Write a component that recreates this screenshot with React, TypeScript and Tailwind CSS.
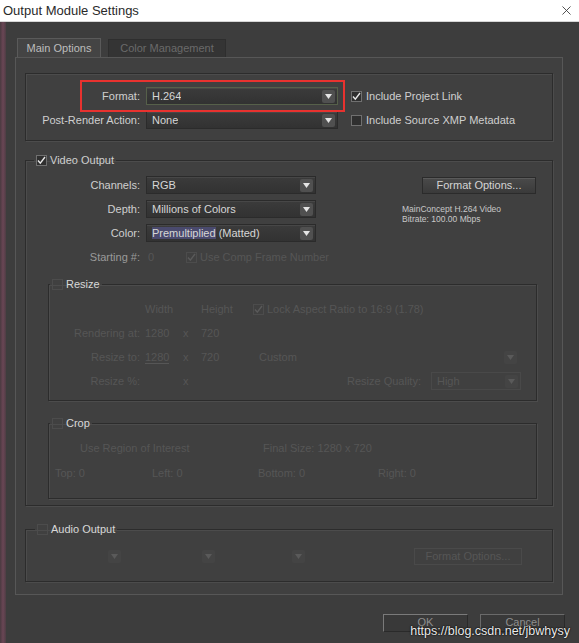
import { X } from "lucide-react";

function Arrow({ dim }: { dim?: boolean }) {
  return (
    <span className={`flex h-[13px] w-[13px] items-center justify-center rounded-[2px] ${dim ? "bg-[#444444]" : "bg-[#505050]"}`}>
      <svg width="7" height="5" viewBox="0 0 7 5">
        <path d="M0 0h7L3.5 5z" fill={dim ? "#5a5a5a" : "#e4e4e4"} />
      </svg>
    </span>
  );
}

function Select({ value, className = "", dim, children }: { value?: string; className?: string; dim?: boolean; children?: React.ReactNode }) {
  return (
    <div
      className={`flex h-[18px] shrink-0 items-center justify-between border pl-[5px] pr-[2px] ${
        dim
          ? "border-[#494949] text-[#565656]"
          : "border-[#2b2b2b] bg-[linear-gradient(#3b3b3b,#323232)] text-[#d6d6d6] shadow-[inset_0_1px_0_#474747]"
      } ${className}`}
    >
      <span className="truncate">{children ?? value}</span>
      <Arrow dim={dim} />
    </div>
  );
}

function Check({ checked, dim }: { checked?: boolean; dim?: boolean }) {
  return (
    <span
      className={`flex h-[11px] w-[11px] shrink-0 items-center justify-center border ${
        dim ? "border-[#4c4c4c]" : "border-[#707070] bg-[#2f2f2f]"
      }`}
    >
      {checked && (
        <svg width="9" height="9" viewBox="0 0 9 9">
          <path d="M1 4.5l2.3 2.6L8 1" fill="none" stroke={dim ? "#5a5a5a" : "#e8e8e8"} strokeWidth="1.4" />
        </svg>
      )}
    </span>
  );
}

const etched = "border border-[#2c2c2c] shadow-[inset_1px_1px_0_#4c4c4c,1px_1px_0_#4c4c4c]";

export default function App() {
  return (
    <div className="relative flex h-[643px] w-[579px] flex-col overflow-hidden bg-[#3d3d3d] font-['Liberation_Sans',Arial,sans-serif] text-[11px] text-[#cfcfcf]">
      {/* title bar */}
      <div className="flex h-[22px] shrink-0 items-center justify-between border-b border-[#d6d6d6] bg-white pl-[3px] pr-[5px]">
        <span className="text-[13px] text-[#2a2a2a]">Output Module Settings</span>
        <X className="h-[15px] w-[15px] text-[#3a3a3a]" strokeWidth={1.4} />
      </div>

      <div className="flex flex-1">
        <div className="w-[6px] bg-[linear-gradient(90deg,#4a3a40,#6a4655,#4e3d44)]" />

        <div className="flex flex-1 flex-col pl-[9px]">
          {/* tabs */}
          <div className="mt-[16px] ml-[2px] flex h-[19px] items-end gap-[7px]">
            <div className="flex h-[19px] w-[84px] items-center justify-center border border-b-0 border-[#5a5a5a] bg-[#444444] text-[#bdbdbd]">
              Main Options
            </div>
            <div className="flex h-[18px] w-[118px] items-center justify-center border border-b-0 border-[#2e2e2e] bg-[#343434] text-[#6a6a6a]">
              Color Management
            </div>
          </div>

          {/* main panel */}
          <div className="flex h-[538px] w-[548px] flex-col border border-[#575757] bg-[#404040] px-[9px]">
            {/* top group */}
            <div className={`relative mt-[15px] flex h-[68px] flex-col gap-[2px] pt-[11px] ${etched}`}>
              <div className="flex h-[22px] items-center">
                <span className="mr-[6px] w-[114px] text-right">Format:</span>
                <Select value="H.264" className="w-[192px] border-[#56604a]" />
                <span className="ml-[13px] flex items-center gap-[4px]">
                  <Check checked />
                  Include Project Link
                </span>
              </div>
              <div className="flex h-[22px] items-center">
                <span className="mr-[6px] w-[114px] text-right">Post-Render Action:</span>
                <Select value="None" className="w-[192px]" />
                <span className="ml-[13px] flex items-center gap-[4px]">
                  <Check />
                  Include Source XMP Metadata
                </span>
              </div>
              <div className="absolute left-[54px] top-[6px] h-[32px] w-[265px] border-2 border-[#e8322f]" />
            </div>

            {/* video output */}
            <fieldset className={`mt-[12px] pb-[6px] ${etched}`}>
              <legend className="ml-[8px] flex h-[14px] items-center gap-[3px] px-[2px]">
                <Check checked />
                Video Output
              </legend>
              <div className="flex pt-[8px]">
                <div className="flex flex-col gap-[4px]">
                  <div className="flex h-[20px] items-center">
                    <span className="mr-[6px] w-[114px] text-right">Channels:</span>
                    <Select value="RGB" className="w-[170px]" />
                  </div>
                  <div className="flex h-[20px] items-center">
                    <span className="mr-[6px] w-[114px] text-right">Depth:</span>
                    <Select value="Millions of Colors" className="w-[170px]" />
                  </div>
                  <div className="flex h-[20px] items-center">
                    <span className="mr-[6px] w-[114px] text-right">Color:</span>
                    <Select className="w-[170px]">
                      <span className="bg-[#4a4a6e]">Premultiplied</span> (Matted)
                    </Select>
                  </div>
                  <div className="flex h-[20px] items-center">
                    <span className="mr-[6px] w-[114px] text-right text-[#9a9a9a]">Starting #:</span>
                    <span className="w-[40px] pl-[2px] text-[#565656]">0</span>
                    <span className="flex items-center gap-[3px] text-[#565656]">
                      <Check checked dim />
                      Use Comp Frame Number
                    </span>
                  </div>
                </div>
                <div className="ml-[73px] flex flex-col">
                  <div className="ml-[20px] mt-[2px] flex h-[17px] w-[114px] items-center justify-center border border-[#2b2b2b] bg-[linear-gradient(#4a4a4a,#3a3a3a)] text-[#d4d4d4] shadow-[inset_0_1px_0_#5a5a5a]">
                    Format Options...
                  </div>
                  <div className="mt-[10px] text-[8.5px] leading-[10px] text-[#c8c8c8]">
                    MainConcept H.264 Video
                    <br />
                    Bitrate: 100.00 Mbps
                  </div>
                </div>
              </div>

              {/* resize */}
              <fieldset className={`ml-[22px] mr-[15px] mt-[10px] pb-[9px] ${etched}`}>
                <legend className="ml-[1px] flex h-[14px] items-center gap-[3px] px-[2px] text-[#d8d8d8]">
                  <Check dim />
                  Resize
                </legend>
                <div className="flex flex-col gap-[4px] pt-[8px] text-[#565656]">
                  <div className="flex h-[20px] items-center">
                    <span className="w-[96px]" />
                    <span className="w-[56px]">Width</span>
                    <span className="w-[52px]">Height</span>
                    <span className="flex items-center gap-[3px]">
                      <Check checked dim />
                      Lock Aspect Ratio to 16:9 (1.78)
                    </span>
                  </div>
                  <div className="flex h-[20px] items-center">
                    <span className="mr-[5px] w-[91px] text-right">Rendering at:</span>
                    <span className="w-[38px]">1280</span>
                    <span className="w-[18px]">x</span>
                    <span className="w-[52px]">720</span>
                  </div>
                  <div className="flex h-[20px] items-center">
                    <span className="mr-[5px] w-[91px] text-right">Resize to:</span>
                    <span className="w-[38px]">
                      <span className="border-b border-[#565656]">1280</span>
                    </span>
                    <span className="w-[18px]">x</span>
                    <span className="w-[52px]">720</span>
                    <Select dim value="Custom" className="w-[267px] border-transparent" />
                  </div>
                  <div className="flex h-[20px] items-center">
                    <span className="mr-[5px] w-[91px] text-right">Resize %:</span>
                    <span className="w-[38px]" />
                    <span className="w-[18px]">x</span>
                    <span className="w-[52px]" />
                    <span className="ml-[94px]">Resize Quality:</span>
                    <Select dim value="High" className="ml-[10px] w-[90px]" />
                  </div>
                </div>
              </fieldset>

              {/* crop */}
              <fieldset className={`ml-[22px] mr-[15px] mt-[15px] pb-[15px] ${etched}`}>
                <legend className="ml-[1px] flex h-[14px] items-center gap-[3px] px-[2px] text-[#d8d8d8]">
                  <Check dim />
                  Crop
                </legend>
                <div className="flex flex-col gap-[5px] pt-[8px] text-[#565656]">
                  <div className="flex h-[20px] items-center">
                    <span className="ml-[31px] w-[183px]">Use Region of Interest</span>
                    <span>Final Size: 1280 x 720</span>
                  </div>
                  <div className="flex h-[20px] items-center pl-[6px]">
                    <span className="w-[97px]">Top: 0</span>
                    <span className="w-[106px]">Left: 0</span>
                    <span className="w-[120px]">Bottom: 0</span>
                    <span>Right: 0</span>
                  </div>
                </div>
              </fieldset>
            </fieldset>

            {/* audio output */}
            <fieldset className={`mt-[16px] pb-[15px] ${etched}`}>
              <legend className="ml-[9px] flex h-[14px] items-center gap-[3px] px-[2px] text-[#d8d8d8]">
                <Check dim />
                Audio Output
              </legend>
              <div className="mt-[10px] flex h-[20px] items-center text-[#565656]">
                <Select dim className="ml-[14px] w-[84px] border-transparent" />
                <Select dim className="ml-[8px] w-[86px] border-transparent" />
                <Select dim className="ml-[12px] w-[78px] border-transparent" />
                <div className="ml-[106px] flex h-[17px] w-[108px] items-center justify-center border border-[#4a4a4a]">
                  Format Options...
                </div>
              </div>
            </fieldset>
          </div>

          {/* buttons */}
          <div className="mt-[19px] ml-[368px] flex gap-[12px]">
            <div className="flex h-[18px] w-[85px] justify-center border border-[#7a7a7a] border-r-[#2a2a2a] border-b-[#2a2a2a] bg-[#393939] pt-[1px] text-[#8e8e8e] leading-[12px]">
              OK
            </div>
            <div className="flex h-[18px] w-[85px] justify-center border border-[#6a6a6a] border-r-[#2a2a2a] border-b-[#2a2a2a] bg-[#393939] pt-[1px] text-[#8e8e8e] leading-[12px]">
              Cancel
            </div>
          </div>
        </div>
      </div>

      <span className="absolute bottom-[5px] right-[9px] text-[12.5px] leading-[13px] text-[#ececec] [text-shadow:0_0_2px_#000,0_0_1px_#000]">
        https://blog.csdn.net/jbwhysy
      </span>
    </div>
  );
}
